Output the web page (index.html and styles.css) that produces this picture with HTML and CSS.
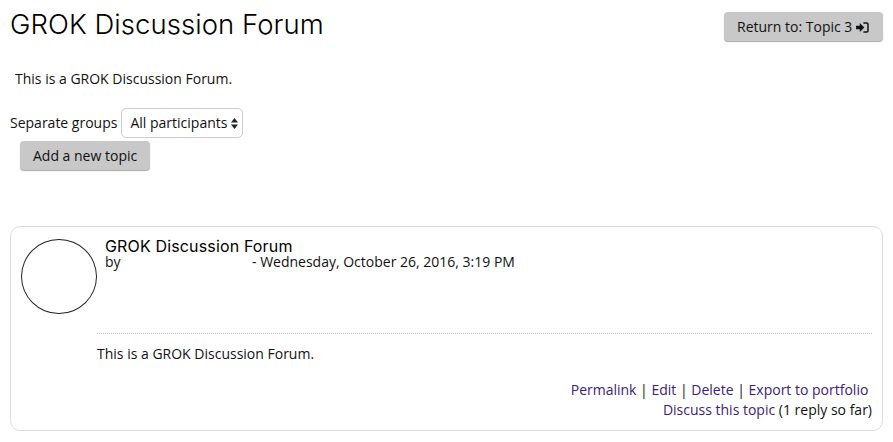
FILE: index.html
```html
<!DOCTYPE html>
<html lang="en">
<head>
  <meta charset="UTF-8">
  <title>GROK Discussion Forum</title>
  <link rel="stylesheet" href="styles.css">
</head>
<body>
  <div class="header">
    <h1>GROK Discussion Forum</h1>
    <button class="btn btn-return">Return to: Topic 3
      <svg class="icon" viewBox="0 0 14 12" width="13" height="11">
        <path d="M0 4h4V1l5 5-5 5V8H0z" fill="#111"/>
        <path d="M8 1h3.500A1.500 1.500 0 0 1 13 2.500v7A1.500 1.500 0 0 1 11.500 11H8" fill="none" stroke="#111" stroke-width="1.600"/>
      </svg>
    </button>
  </div>

  <p class="intro">This is a GROK Discussion Forum.</p>

  <div class="groups">
    <span>Separate groups</span>
    <div class="select">All participants
      <svg class="arrows" viewBox="0 0 7 11" width="7" height="11">
        <path d="M3.500 0L7 4.500H0zM3.500 11L0 6.500h7z" fill="#222"/>
      </svg>
    </div>
  </div>
  <button class="btn btn-add">Add a new topic</button>

  <div class="post">
    <div class="post-top">
      <div class="avatar"></div>
      <div class="post-head">
        <div class="subject">GROK Discussion Forum</div>
        <div class="author"><span class="by">by</span>- Wednesday, October 26, 2016, 3:19 PM</div>
      </div>
    </div>
    <div class="post-body">
      <p>This is a GROK Discussion Forum.</p>
      <div class="commands">
        <div class="cmd-row"><a href="#">Permalink</a> | <a href="#">Edit</a> | <a href="#">Delete</a> | <a href="#">Export to portfolio</a>&nbsp;</div>
        <div class="cmd-row"><a href="#">Discuss this topic</a> (1 reply so far)</div>
      </div>
    </div>
  </div>
</body>
</html>
```

FILE: styles.css
```css
body {
  margin: 0;
  padding: 0 10px;
  background: #fff;
  color: #111;
  font-family: "Open Sans", sans-serif;
  font-size: 14px;
  line-height: 20px;
}

.header {
  display: flex;
  justify-content: space-between;
  align-items: flex-start;
  padding-top: 12px;
}

h1 {
  margin: 0;
  font-family: Inter, sans-serif;
  font-size: 27.5px;
  font-weight: 300;
  line-height: 24px;
  letter-spacing: 0.05px;
  color: #000;
}

.btn {
  border: none;
  border-radius: 4px;
  background: #c8c8c8;
  box-shadow: 0 1px 1px #aaa;
  color: #111;
  font-family: "Open Sans", sans-serif;
  font-size: 14px;
  line-height: 20px;
  padding: 5px 13px;
  height: 29px;
}

.btn-return {
  padding: 5px 11px 5px 13px;
  width: 159px;
  text-align: left;
}

.icon {
  vertical-align: -1px;
}

.intro {
  margin: 28px 0 0 5px;
}

.groups {
  display: flex;
  align-items: center;
  gap: 4px;
  margin-top: 19px;
}

.select {
  display: flex;
  align-items: center;
  gap: 4px;
  height: 28px;
  padding: 0 4px 0 8px;
  border: 1px solid #ccc;
  border-radius: 5px;
}

.btn-add {
  display: block;
  margin: 3px 0 0 10px;
}

.post {
  margin-top: 56px;
  height: 203px;
  border: 1px solid #ddd;
  border-radius: 10px;
}

.post-top {
  display: flex;
  height: 106px;
}

.avatar {
  width: 74px;
  height: 73px;
  margin: 12px 0 0 10px;
  border: 1px solid #222;
  border-radius: 50%;
}

.post-head {
  margin: 12px 0 0 8px;
}

.subject {
  font-family: Inter, sans-serif;
  font-size: 16px;
  line-height: 15px;
  letter-spacing: 0.15px;
  color: #000;
}

.author {
  line-height: 16px;
}

.by {
  display: inline-block;
  width: 147px;
}

.post-body {
  margin: 0 10px 0 86px;
}

.post-body p {
  margin: 0;
  padding-top: 10px;
  border-top: 1px dotted #bbb;
}

.commands {
  margin-top: 16px;
  text-align: right;
}

.cmd-row {
  height: 20px;
}

a {
  color: #3c2080;
  text-decoration: none;
}
```
